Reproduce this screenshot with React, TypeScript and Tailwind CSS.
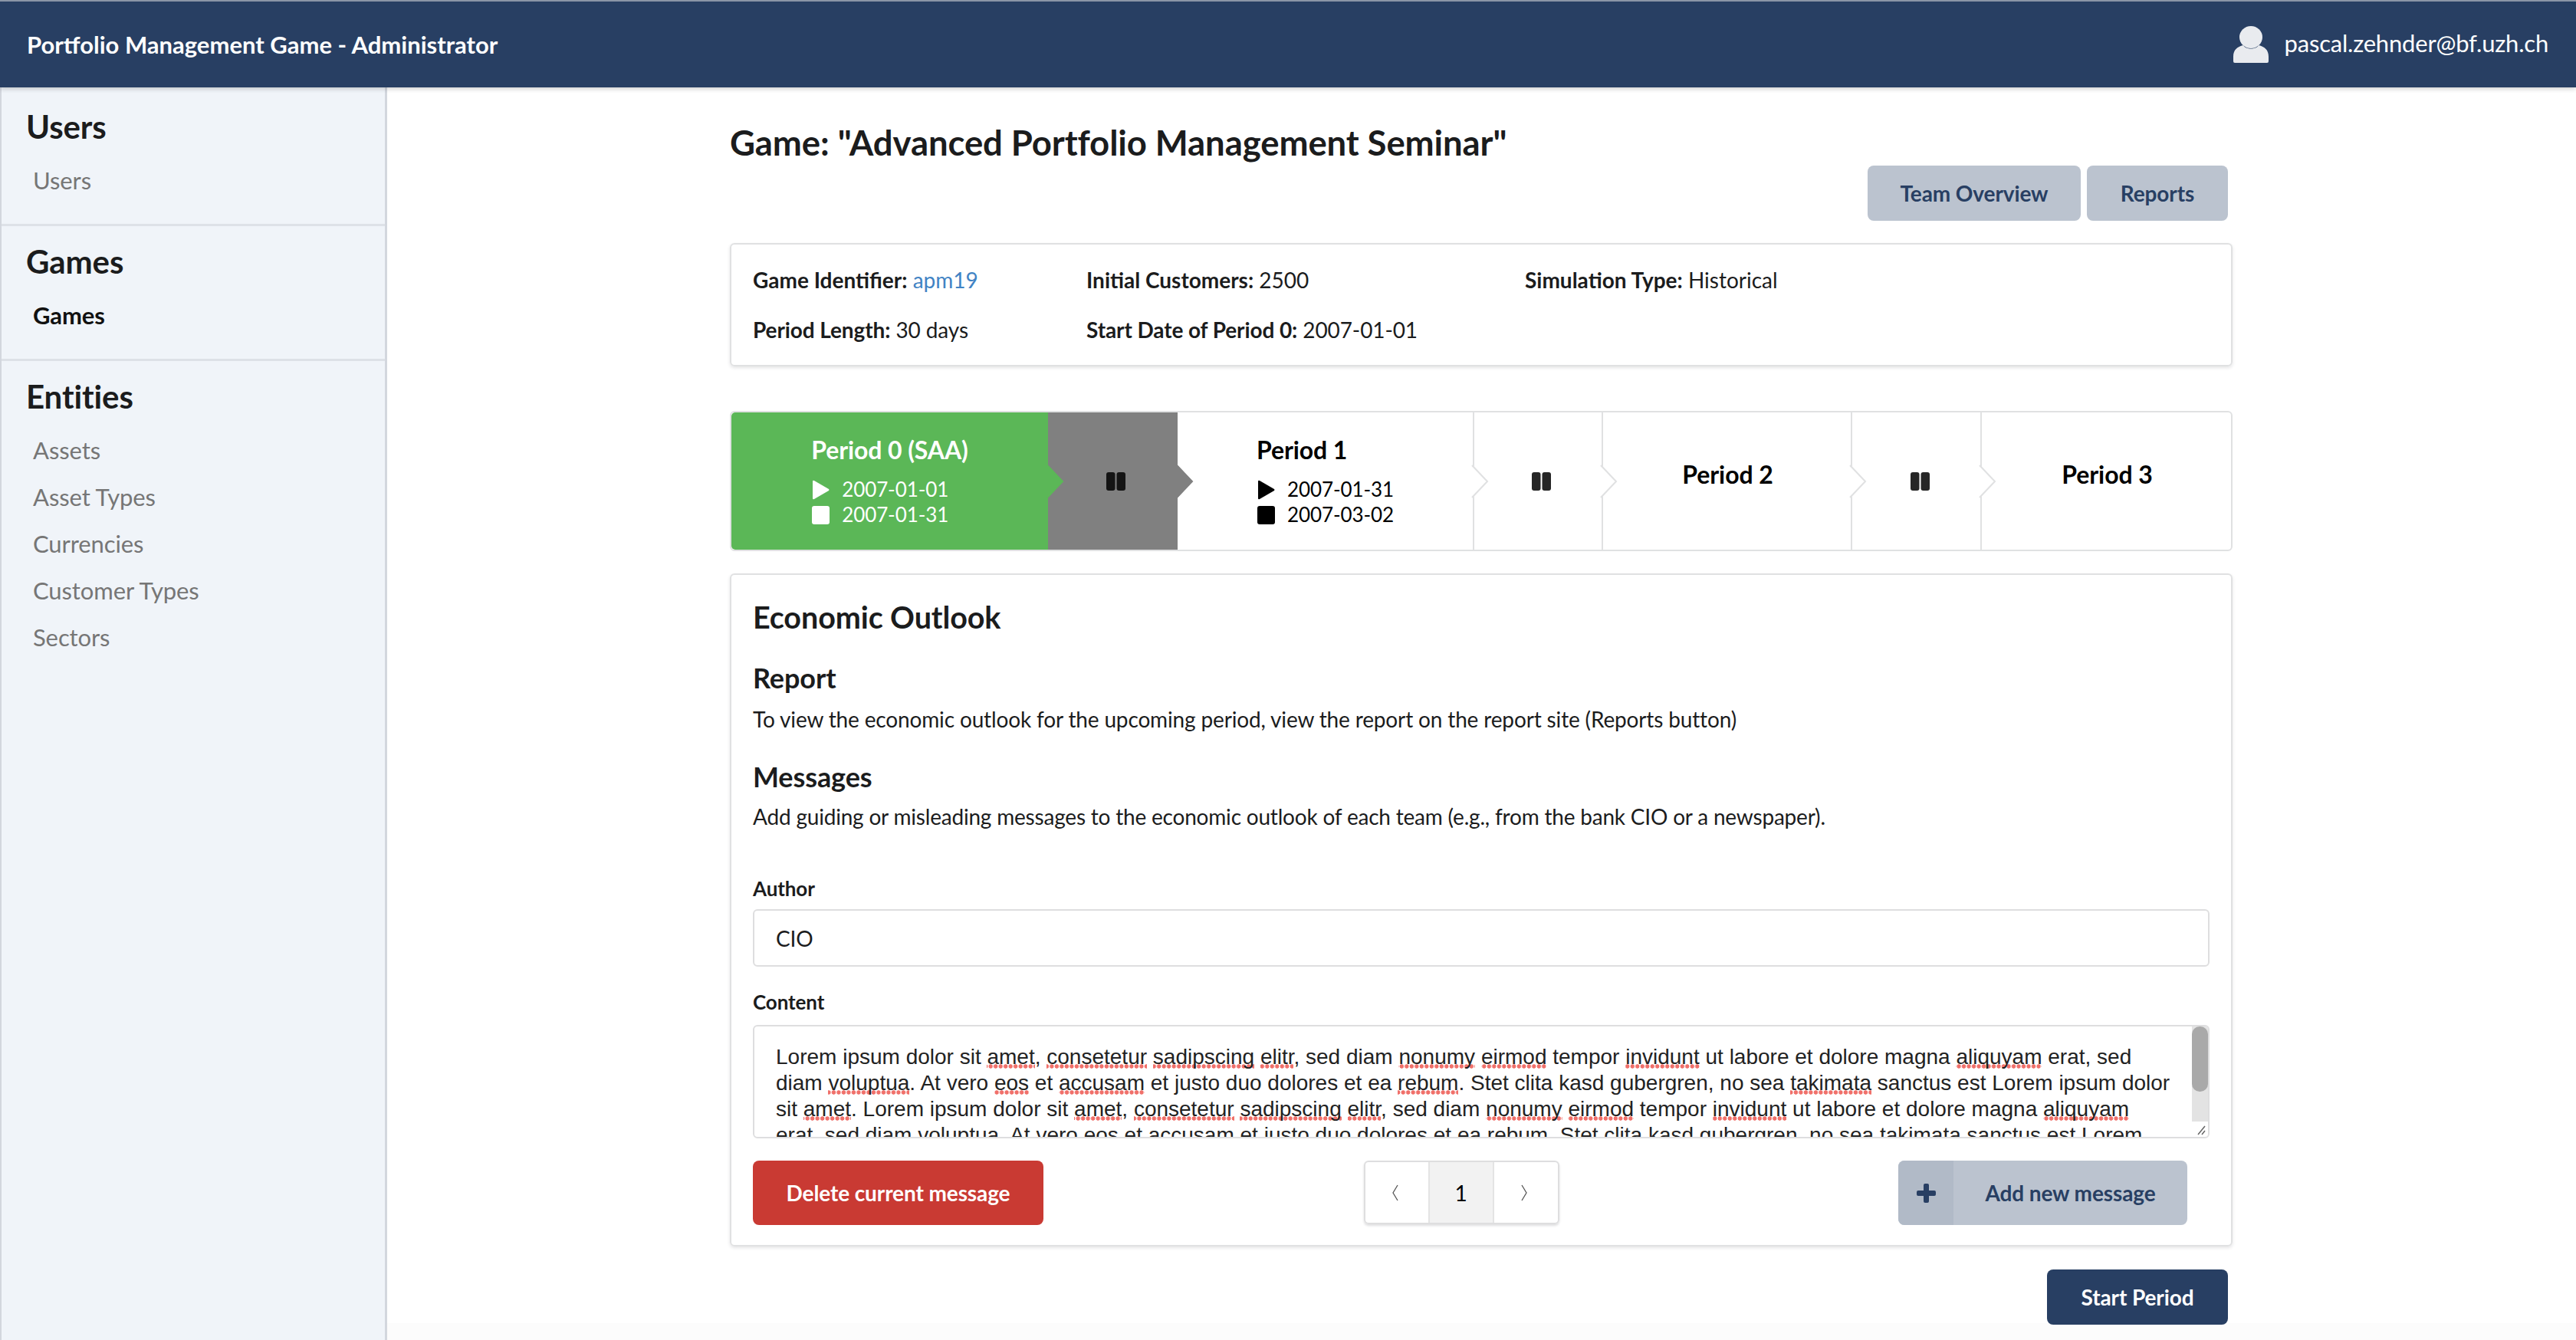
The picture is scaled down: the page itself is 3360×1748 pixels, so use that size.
import React from "react";

const MIS = new Set(["amet","consetetur","sadipscing","elitr","nonumy","eirmod","invidunt","aliquyam","voluptua","eos","accusam","rebum","takimata"]);
const LINES = [
  "Lorem ipsum dolor sit amet, consetetur sadipscing elitr, sed diam nonumy eirmod tempor invidunt ut labore et dolore magna aliquyam erat, sed",
  "diam voluptua. At vero eos et accusam et justo duo dolores et ea rebum. Stet clita kasd gubergren, no sea takimata sanctus est Lorem ipsum dolor",
  "sit amet. Lorem ipsum dolor sit amet, consetetur sadipscing elitr, sed diam nonumy eirmod tempor invidunt ut labore et dolore magna aliquyam",
  "erat, sed diam voluptua. At vero eos et accusam et justo duo dolores et ea rebum. Stet clita kasd gubergren, no sea takimata sanctus est Lorem",
];

function Line({ text }: { text: string }) {
  const parts = text.split(/(\s+|[.,])/);
  return (
    <div className="whitespace-pre h-[34px] leading-[34px]">
      {parts.map((p, i) =>
        MIS.has(p) ? (
          <span key={i} className="bg-[radial-gradient(circle,#f0706a_2.4px,transparent_3px)] bg-[length:6.5px_6px] bg-repeat-x bg-bottom">{p}</span>
        ) : (
          <span key={i}>{p}</span>
        )
      )}
    </div>
  );
}

function Pause({ fill = "#1b1c1d" }: { fill?: string }) {
  return (
    <svg width="25" height="24" viewBox="0 0 25 24" className="block">
      <rect x="0" y="0" width="11.5" height="24" rx="3" fill={fill} />
      <rect x="13.5" y="0" width="11.5" height="24" rx="3" fill={fill} />
    </svg>
  );
}

function Arrow({ fill, stroke }: { fill: string; stroke: string }) {
  return (
    <svg width="24" height="46" viewBox="0 0 24 46" className="absolute left-full top-[67px] -ml-[2px] z-10 overflow-visible">
      <polygon points="0,2 2,2 21,23 2,44 0,44" fill={fill} />
      <polyline points="1,2 21,23 1,44" fill="none" stroke={stroke} strokeWidth="2" />
    </svg>
  );
}

function Dates({ a, b, color }: { a: string; b: string; color: string }) {
  return (
    <div className="flex flex-col mt-[15px] ml-[1px] text-[26px] leading-[33px]">
      <div className="flex items-center gap-[16px]">
        <svg width="23" height="26" viewBox="0 0 23 26">
          <path d="M1 2 Q1 0 3 1 L22 12 Q23 13 22 14 L3 25 Q1 26 1 24 Z" fill={color} />
        </svg>
        <span>{a}</span>
      </div>
      <div className="flex items-center gap-[16px]">
        <svg width="23" height="24" viewBox="0 0 23 24">
          <rect x="0" y="0" width="23" height="24" rx="3" fill={color} />
        </svg>
        <span>{b}</span>
      </div>
    </div>
  );
}

function SideGroup({ title, children, last }: { title: string; children: React.ReactNode; last?: boolean }) {
  return (
    <div className={last ? "pt-[21px] px-[32px]" : "pt-[21px] px-[32px] pb-[26px] border-b-[3px] border-[#dde1e7]"}>
      <div className="text-[42px] leading-[50px] font-bold text-[#1b1c1d]">{title}</div>
      <div className="mt-[15px] pl-[9px]">{children}</div>
    </div>
  );
}

function SideLink({ children, active }: { children: React.ReactNode; active?: boolean }) {
  return (
    <div className={active ? "h-[61px] leading-[61px] text-[31px] font-bold text-[#111]" : "h-[61px] leading-[61px] text-[31px] text-[#767676]"}>
      {children}
    </div>
  );
}

export default function App() {
  return (
    <div className="h-[1748px] w-[3360px] overflow-hidden flex flex-col bg-white font-['Lato','Open_Sans',sans-serif] text-[28px] tracking-[-0.1px] text-[#1b1c1d]">
      <header className="h-[114px] shrink-0 border-t-2 border-[#8a95a6] bg-[#283f63] flex items-center justify-between pl-[35px] pr-[36px] text-white shadow-[0_2px_6px_rgba(0,0,0,0.2)] z-20">
        <div className="text-[31px] font-bold tracking-normal">Portfolio Management Game - Administrator</div>
        <div className="flex items-center gap-[21px]">
          <svg width="46" height="48" viewBox="0 0 46 48" className="block">
            <ellipse cx="23" cy="14.5" rx="15" ry="14.5" fill="#e9ebef" />
            <path d="M13 25 C16 31 30 31 33 25 C41 27 46 31 46 40 L46 46 Q46 48 44 48 L2 48 Q0 48 0 46 L0 40 C0 31 5 27 13 25 Z" fill="#e9ebef" />
          </svg>
          <span className="text-[31px] tracking-[-0.2px] -translate-y-[2px]">pascal.zehnder@bf.uzh.ch</span>
        </div>
      </header>

      <div className="flex flex-1 min-h-0">
        <aside className="w-[505px] shrink-0 pt-[5px] bg-[#f0f4f9] border-l-2 border-r-[3px] border-[#d3d7de]">
          <SideGroup title="Users"><SideLink>Users</SideLink></SideGroup>
          <SideGroup title="Games"><SideLink active>Games</SideLink></SideGroup>
          <SideGroup title="Entities" last>
            <SideLink>Assets</SideLink>
            <SideLink>Asset Types</SideLink>
            <SideLink>Currencies</SideLink>
            <SideLink>Customer Types</SideLink>
            <SideLink>Sectors</SideLink>
          </SideGroup>
        </aside>

        <main className="flex-1 pl-[447px] bg-[linear-gradient(to_bottom,#fff_1612px,#fcfcfc_1612px)]">
          <div className="w-[1960px] flex flex-col">
            <h1 className="mt-[40px] h-[64px] text-[45.5px] leading-[64px] font-bold">Game: "Advanced Portfolio Management Seminar"</h1>
            <div className="flex justify-end gap-[8px] pr-[6px] -mt-[2px]">
              <button className="h-[72px] w-[278px] rounded-[8px] bg-[#bbc3cf] text-[#283f63] font-bold text-[28px]">Team Overview</button>
              <button className="h-[72px] w-[184px] rounded-[8px] bg-[#bbc3cf] text-[#283f63] font-bold text-[28px]">Reports</button>
            </div>

            <section className="mt-[29px] h-[161px] rounded-[6px] border-2 border-[#e0e1e2] shadow-[0_2px_4px_rgba(34,36,38,0.12)] pl-[28px] pt-[13px] grid grid-cols-[435px_572px_1fr] auto-rows-[65px] items-center">
              <div className="tracking-normal"><b>Game Identifier:</b> <span className="text-[#4183c4]">apm19</span></div>
              <div className="tracking-normal"><b>Initial Customers:</b> 2500</div>
              <div className="tracking-normal"><b>Simulation Type:</b> Historical</div>
              <div><b>Period Length:</b> 30 days</div>
              <div><b>Start Date of Period 0:</b> 2007-01-01</div>
            </section>

            <section className="mt-[58px] h-[183px] rounded-[6px] border-2 border-[#e0e1e2] flex">
              <div className="relative w-[413px] bg-[#5bb757] text-white rounded-l-[5px] flex justify-center pt-[29px]">
                <div>
                  <div className="text-[32px] leading-[40px] font-bold">Period 0 (SAA)</div>
                  <Dates a="2007-01-01" b="2007-01-31" color="#fff" />
                </div>
                <Arrow fill="#5bb757" stroke="#5bb757" />
              </div>
              <div className="relative w-[169px] bg-[#808080] flex items-center justify-center pl-[8px]">
                <Pause fill="#141414" />
                <Arrow fill="#808080" stroke="#808080" />
              </div>
              <div className="relative w-[387px] border-r-2 border-[#e0e1e2] text-black flex justify-center pt-[29px]">
                <div>
                  <div className="text-[32px] leading-[40px] font-bold">Period 1</div>
                  <Dates a="2007-01-31" b="2007-03-02" color="#000" />
                </div>
                <Arrow fill="#fff" stroke="#e0e1e2" />
              </div>
              <div className="relative w-[168px] border-r-2 border-[#e0e1e2] flex items-center justify-center pl-[8px]">
                <Pause fill="#262626" />
                <Arrow fill="#fff" stroke="#e0e1e2" />
              </div>
              <div className="relative w-[325px] border-r-2 border-[#e0e1e2] text-black flex flex-col items-center pt-[61px] pl-[2px]">
                <div className="text-[32px] leading-[40px] font-bold">Period 2</div>
                <Arrow fill="#fff" stroke="#e0e1e2" />
              </div>
              <div className="relative w-[169px] border-r-2 border-[#e0e1e2] flex items-center justify-center pl-[10px]">
                <Pause fill="#262626" />
                <Arrow fill="#fff" stroke="#e0e1e2" />
              </div>
              <div className="flex-1 text-black flex flex-col items-center pt-[61px] pl-[2px]">
                <div className="text-[32px] leading-[40px] font-bold">Period 3</div>
              </div>
            </section>

            <section className="mt-[29px] h-[878px] rounded-[6px] border-2 border-[#e0e1e2] shadow-[0_2px_4px_rgba(34,36,38,0.12)] px-[28px] pt-[29px] flex flex-col">
              <h2 className="text-[39.5px] leading-[52px] font-bold">Economic Outlook</h2>
              <h3 className="mt-[28px] text-[36px] leading-[50px] font-bold">Report</h3>
              <p className="mt-[9px] text-[28px] leading-[40px] tracking-[-0.15px]">To view the economic outlook for the upcoming period, view the report on the report site (Reports button)</p>
              <h3 className="mt-[30px] text-[36px] leading-[50px] font-bold">Messages</h3>
              <p className="mt-[7px] text-[28px] leading-[40px] tracking-[-0.2px]">Add guiding or misleading messages to the economic outlook of each team (e.g., from the bank CIO or a newspaper).</p>
              <label className="mt-[58px] text-[26px] leading-[32px] font-bold">Author</label>
              <div className="mt-[11px] h-[75px] rounded-[6px] border-2 border-[#dededf] flex items-center pl-[28px] text-[28px]">CIO</div>
              <label className="mt-[30px] text-[26px] leading-[32px] font-bold">Content</label>
              <div className="relative mt-[14px] h-[148px] rounded-[6px] border-2 border-[#dededf] overflow-hidden pl-[28px] pt-[23px] font-['Liberation_Sans',Arial,sans-serif] tracking-normal text-[28px] text-[#222]">
                {LINES.map((l, i) => <Line key={i} text={l} />)}
                <div className="absolute right-0 top-0 bottom-0 w-[21px] bg-[#e3e3e3]">
                  <div className="h-[85px] rounded-[10px] bg-[#a9a9a9]" />
                  <div className="absolute bottom-0 left-0 right-0 h-[20px] bg-white">
                    <svg width="21" height="20" viewBox="0 0 21 20" className="block">
                      <path d="M8 17 L17 6 M13 17 L17 12" stroke="#666" strokeWidth="1.5" fill="none" />
                    </svg>
                  </div>
                </div>
              </div>
              <div className="mt-[29px] flex items-start justify-between pr-[29px]">
                <button className="h-[84px] w-[379px] rounded-[8px] bg-[#c93a33] text-white font-bold text-[28px]">Delete current message</button>
                <div className="h-[83px] w-[255px] -ml-[25px] rounded-[6px] border-2 border-[#dededf] shadow-[0_2px_3px_rgba(34,36,38,0.15)] flex overflow-hidden">
                  <div className="w-[82px] pr-[4px] flex items-center justify-center">
                    <svg width="8" height="22" viewBox="0 0 8 22"><polyline points="7,1 1,11 7,21" fill="none" stroke="#555" strokeWidth="1.3" /></svg>
                  </div>
                  <div className="w-[86px] bg-[#f2f2f2] border-x-2 border-[#e4e4e4] flex items-center justify-center text-[28px] text-black">1</div>
                  <div className="flex-1 pr-[4px] flex items-center justify-center">
                    <svg width="8" height="22" viewBox="0 0 8 22"><polyline points="1,1 7,11 1,21" fill="none" stroke="#555" strokeWidth="1.3" /></svg>
                  </div>
                </div>
                <button className="h-[84px] w-[377px] rounded-[8px] bg-[#bbc3cf] text-[#283f63] font-bold text-[28px] flex items-stretch overflow-hidden">
                  <span className="w-[72px] bg-[#b1bac7] flex items-center justify-center">
                    <svg width="25" height="25" viewBox="0 0 25 25"><path d="M9 2 Q9 0 11 0 L14 0 Q16 0 16 2 L16 9 L23 9 Q25 9 25 11 L25 14 Q25 16 23 16 L16 16 L16 23 Q16 25 14 25 L11 25 Q9 25 9 23 L9 16 L2 16 Q0 16 0 14 L0 11 Q0 9 2 9 L9 9 Z" fill="#283f63" /></svg>
                  </span>
                  <span className="flex-1 flex items-center justify-center">Add new message</span>
                </button>
              </div>
            </section>

            <div className="mt-[30px] flex justify-end pr-[6px]">
              <button className="h-[72px] w-[236px] rounded-[8px] bg-[#283f63] text-white font-bold text-[28px]">Start Period</button>
            </div>
          </div>
        </main>
      </div>
    </div>
  );
}
